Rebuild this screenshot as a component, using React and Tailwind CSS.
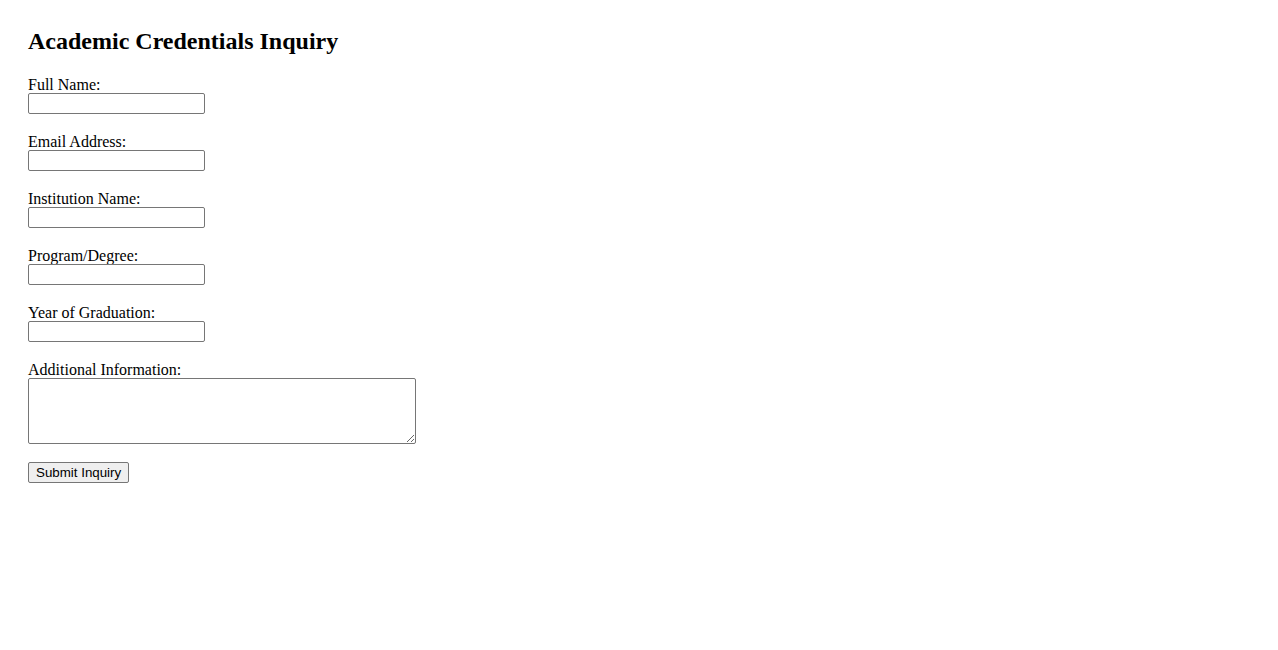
export default function App() {
  const fields = [
    "Full Name:",
    "Email Address:",
    "Institution Name:",
    "Program/Degree:",
    "Year of Graduation:",
  ];
  return (
    <div className="min-h-[650px] bg-white pl-[28px] pt-[27px] text-black" style={{ fontFamily: '"Liberation Serif", "Times New Roman", serif' }}>
      <h2 className="text-[24px] leading-[28px] font-bold m-0">Academic Credentials Inquiry</h2>
      <form className="mt-[19px] flex flex-col items-start" onSubmit={(e) => e.preventDefault()}>
        {fields.map((f) => (
          <div key={f} className="flex flex-col items-start h-[57px]">
            <label className="block text-[16px] leading-[22px]">{f}</label>
            <input
              type="text"
              className="-mt-[3px] w-[177px] h-[21px] border border-[#767676] rounded-[2px] bg-white px-[2px] text-[13.33px] outline-none"
              style={{ fontFamily: '"Liberation Sans", Arial, sans-serif' }}
            />
          </div>
        ))}
        <div className="flex flex-col items-start">
          <label className="block text-[16px] leading-[22px]">Additional Information:</label>
          <textarea
            className="-mt-[3px] w-[388px] h-[66px] border border-[#767676] rounded-[2px] bg-white outline-none"
            style={{ resize: "both" }}
          />
        </div>
        <button
          type="submit"
          className="mt-[18px] h-[21px] px-[7px] border border-[#767676] rounded-[2px] bg-[#efefef] text-[13.33px] leading-[15px] text-black"
          style={{ fontFamily: '"Liberation Sans", Arial, sans-serif' }}
        >
          Submit Inquiry
        </button>
      </form>
    </div>
  );
}
